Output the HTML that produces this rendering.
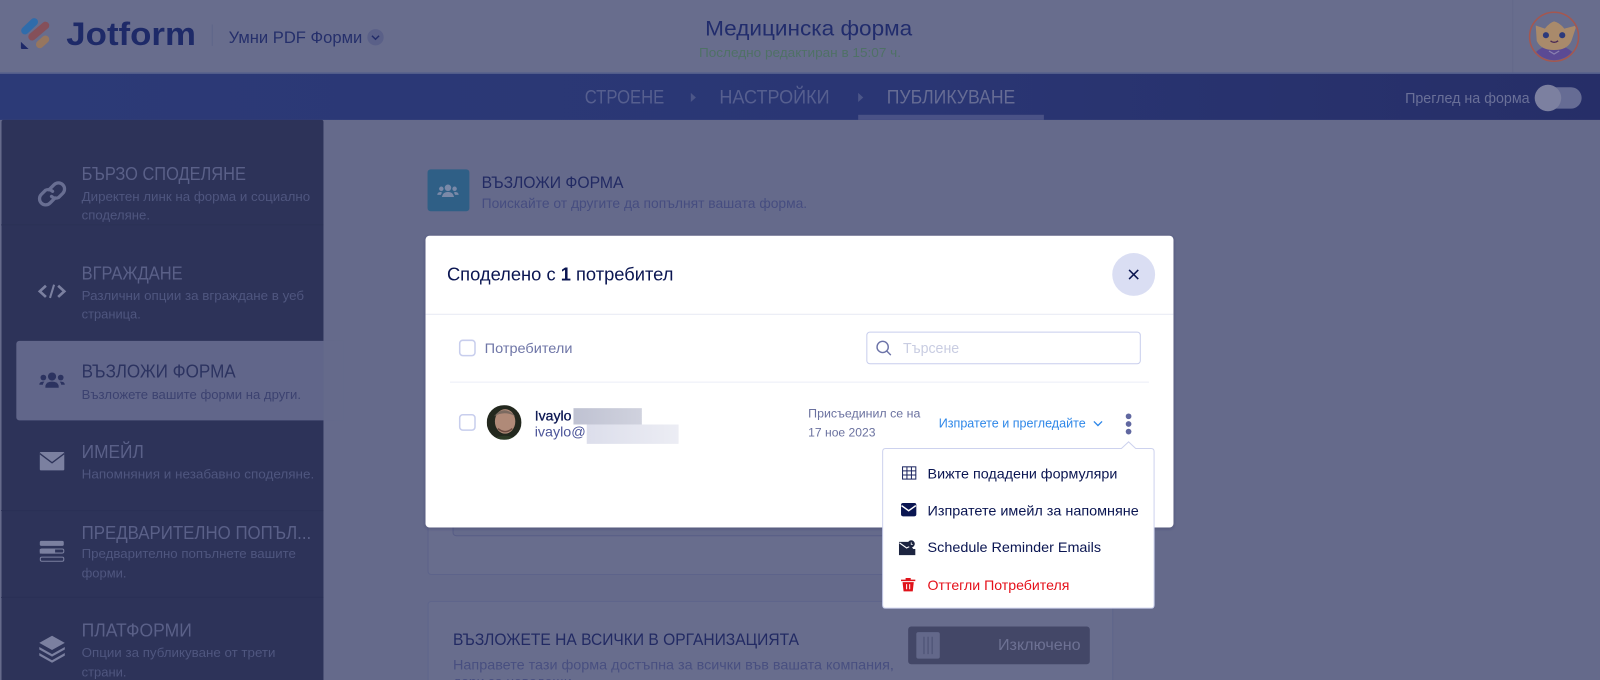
<!DOCTYPE html>
<html><head><meta charset="utf-8"><style>
html,body{margin:0;padding:0;background:#656a8b;width:1600px;height:680px;overflow:hidden}
svg{display:block;font-family:"Liberation Sans",sans-serif}
</style></head><body>
<svg width="1600" height="680" viewBox="0 0 1568 666.4" xmlns="http://www.w3.org/2000/svg">
<defs>
<linearGradient id="nv" x1="0" x2="1"><stop offset="0" stop-color="#2c3a77"/><stop offset=".55" stop-color="#2a3674"/><stop offset="1" stop-color="#262e67"/></linearGradient>
<linearGradient id="b1" x1="0" x2="1"><stop offset="0" stop-color="#bfc2d2"/><stop offset="1" stop-color="#d0d2de"/></linearGradient>
<linearGradient id="b2" x1="0" x2="1"><stop offset="0" stop-color="#dcdeeb"/><stop offset="1" stop-color="#eceDf4"/></linearGradient>
<filter id="sh" x="-5%" y="-5%" width="110%" height="115%"><feDropShadow dx="0" dy="1" stdDeviation="1.5" flood-color="#2a2f55" flood-opacity=".35"/></filter>
<clipPath id="av"><circle cx="1523" cy="36" r="23"/></clipPath>
<clipPath id="fa"><circle cx="494" cy="414" r="17"/></clipPath>
</defs>
<rect width="1600" height="700" fill="#656a8b"/>
<!-- header -->
<rect width="1600" height="71" fill="#686d8d"/>
<rect y="71" width="1600" height="1.500" fill="#525d8b"/>
<g stroke-linecap="round" fill="none">
<path d="M24.500 30L33.500 21.500" stroke="#2f6cab" stroke-width="7.500"/>
<path d="M31.500 36L44.500 25" stroke="#85505a" stroke-width="7.500"/>
<path d="M39 43.500L44.500 38.500" stroke="#96765f" stroke-width="7.500"/>
</g>
<path d="M20.500 41L28 48H21.500Q20.500 48 20.500 47Z" fill="#1e2968"/>
<text x="65" y="44" font-size="32" font-weight="700" fill="#1e2a68" textLength="127" lengthAdjust="spacingAndGlyphs">Jotform</text>
<rect x="207.500" y="24" width="1" height="21" fill="#5f6589"/>
<text x="224" y="42" font-size="16.500" fill="#252f6b" textLength="131" lengthAdjust="spacingAndGlyphs">Умни PDF Форми</text>
<circle cx="368" cy="36.500" r="8" fill="#5a6088"/>
<path d="M364.500 35l3.500 3.500 3.500-3.500" fill="none" stroke="#222c68" stroke-width="1.400"/>
<text x="691" y="35" font-size="20.500" fill="#212c6c" textLength="203" lengthAdjust="spacingAndGlyphs">Медицинска форма</text>
<text x="685" y="56" font-size="13" fill="#4f7166" textLength="198" lengthAdjust="spacingAndGlyphs">Последно редактиран в 15:07 ч.</text>
<rect x="1482" y="0" width="1" height="71" fill="#63688a"/>
<!-- avatar -->
<circle cx="1523" cy="36" r="24" fill="#686d8d" stroke="#a5574f" stroke-width="1.500"/>
<g clip-path="url(#av)">
<path d="M1500 60Q1503 50 1513 46H1533Q1543 50 1546 60V64H1500Z" fill="#5b4a94"/>
<path d="M1505 25L1514 28Q1519 22 1523 21Q1528 22 1533 28L1545 25L1540 40Q1536 49 1523 49Q1510 49 1506 40Z" fill="#a98a6b"/>
<circle cx="1515" cy="34.500" r="3" fill="#2c3a7c"/><circle cx="1531" cy="34.500" r="3" fill="#2c3a7c"/>
<path d="M1519.500 40Q1523 43 1527 40" stroke="#4b2a55" stroke-width="1.300" fill="none"/>
<path d="M1518 50l5 3 5-3" stroke="#8a80b0" stroke-width="1.200" fill="none"/>
</g>
<!-- nav -->
<rect y="72.500" width="1600" height="45" fill="url(#nv)"/>
<text x="573" y="101.500" font-size="19" fill="#565f8f" textLength="78" lengthAdjust="spacingAndGlyphs">СТРОЕНЕ</text>
<path d="M677 91l5 4.500-5 4.500z" fill="#4c5688"/>
<text x="705" y="101.500" font-size="19" fill="#565f8f" textLength="108" lengthAdjust="spacingAndGlyphs">НАСТРОЙКИ</text>
<path d="M841 91l5 4.500-5 4.500z" fill="#4c5688"/>
<text x="869" y="101.500" font-size="19" fill="#666c94" textLength="126" lengthAdjust="spacingAndGlyphs">ПУБЛИКУВАНЕ</text>
<rect x="841" y="112.500" width="182" height="5" fill="#4a5286"/>
<text x="1377" y="101" font-size="14.500" fill="#6a7098" textLength="122" lengthAdjust="spacingAndGlyphs">Преглед на форма</text>
<rect x="1505" y="85.500" width="45" height="21" rx="10.500" fill="#666c94"/>
<circle cx="1517" cy="96" r="13" fill="#7c80a0"/>
<!-- sidebar -->
<rect x="1.500" y="117.500" width="315.500" height="562" rx="2" fill="#2d3359"/>
<rect x="16" y="334" width="314" height="78" rx="3" fill="#61668a"/>
<rect x="317" y="334" width="20" height="78" fill="#656a8b"/>
<rect x="1" y="220" width="316" height=".8" fill="#2a3055"/>
<rect x="1" y="500" width="316" height=".8" fill="#2a3055"/>
<rect x="1" y="585" width="316" height=".8" fill="#2a3055"/>
<g font-size="18" fill="#5a6088">
<text x="80" y="176.500" textLength="161" lengthAdjust="spacingAndGlyphs">БЪРЗО СПОДЕЛЯНЕ</text>
<text x="80" y="274" textLength="99" lengthAdjust="spacingAndGlyphs">ВГРАЖДАНЕ</text>
<text x="80" y="370" textLength="151" lengthAdjust="spacingAndGlyphs" fill="#2c3360">ВЪЗЛОЖИ ФОРМА</text>
<text x="80" y="449" textLength="61" lengthAdjust="spacingAndGlyphs">ИМЕЙЛ</text>
<text x="80" y="528" textLength="225" lengthAdjust="spacingAndGlyphs">ПРЕДВАРИТЕЛНО ПОПЪЛ...</text>
<text x="80" y="624" textLength="108" lengthAdjust="spacingAndGlyphs">ПЛАТФОРМИ</text>
</g>
<g font-size="12.500" fill="#4f567f">
<text x="80" y="197" textLength="224" lengthAdjust="spacingAndGlyphs">Директен линк на форма и социално</text>
<text x="80" y="215" textLength="67" lengthAdjust="spacingAndGlyphs">споделяне.</text>
<text x="80" y="294" textLength="218" lengthAdjust="spacingAndGlyphs">Различни опции за вграждане в уеб</text>
<text x="80" y="312" textLength="58" lengthAdjust="spacingAndGlyphs">страница.</text>
<text x="80" y="391" textLength="215" lengthAdjust="spacingAndGlyphs" fill="#3c4270">Възложете вашите форми на други.</text>
<text x="80" y="469" textLength="228" lengthAdjust="spacingAndGlyphs">Напомняния и незабавно споделяне.</text>
<text x="80" y="547" textLength="210" lengthAdjust="spacingAndGlyphs">Предварително попълнете вашите</text>
<text x="80" y="566" textLength="44" lengthAdjust="spacingAndGlyphs">форми.</text>
<text x="80" y="644" textLength="190" lengthAdjust="spacingAndGlyphs">Опции за публикуване от трети</text>
<text x="80" y="663" textLength="44" lengthAdjust="spacingAndGlyphs">страни.</text>
</g>
<!-- side icons -->
<g fill="none" stroke="#686e92" stroke-width="3.200" stroke-linecap="round">
<path d="M48 186l5-5a6 6 0 0 1 8.500 8.500l-4 4a6 6 0 0 1-7-1"/>
<path d="M54 194l-5 5a6 6 0 0 1-8.500-8.500l4-4a6 6 0 0 1 7 1"/>
</g>
<g fill="none" stroke="#7b80a0" stroke-width="2.600"><path d="M45 280l-6 5.500 6 5.500M57 280l6 5.500-6 5.500"/><path d="M53 279l-4 13" stroke-width="2"/></g>
<g fill="#2c3360">
<circle cx="51" cy="369" r="4"/><circle cx="42.500" cy="370" r="2.800"/><circle cx="59.500" cy="370" r="2.800"/>
<path d="M44.500 378q1-4 6.500-4t6.500 4v2H44.500z"/><path d="M38.500 377q0-3 4-3l1 0q-1.500 1.500-1.500 3zM63.500 377q0-3-4-3l-1 0q1.500 1.500 1.500 3z"/>
</g>
<path d="M39 453q0-1 1-1h22q1 0 1 1v16q0 1-1 1H40q-1 0-1-1z" transform="translate(0 -9)" fill="#7b80a0"/>
<path d="M39 444.500l12 9 12-9" fill="none" stroke="#2d3359" stroke-width="1.300"/>
<g>
<rect x="39" y="530" width="23.500" height="5" rx="1.500" fill="#7b80a0"/>
<rect x="39.500" y="538" width="23" height="4" rx="1.500" fill="none" stroke="#7b80a0" stroke-width="1"/><rect x="39" y="538" width="15" height="4.500" fill="#7b80a0"/>
<rect x="39.500" y="546" width="23" height="4" rx="1.500" fill="none" stroke="#7b80a0" stroke-width="1"/>
</g>
<g fill="#7b80a0"><path d="M51 623l12.500 7-12.500 7-12.500-7z"/><path d="M38.500 634l12.500 7 12.500-7v2.500l-12.500 7-12.500-7z"/><path d="M38.500 640l12.500 7 12.500-7v2.500l-12.500 7-12.500-7z"/></g>
<!-- content -->
<rect x="419" y="166" width="41" height="41" rx="3" fill="#2f5f86"/>
<g fill="#7a89a8"><circle cx="439" cy="184" r="3.200"/><circle cx="432.500" cy="185" r="2.200"/><circle cx="445.500" cy="185" r="2.200"/><path d="M433 193q1-5 6-5t6 5z"/><path d="M428.500 191q0-3 4-3l.5 1-1 2zM449.500 191q0-3-4-3l-.5 1 1 2z"/></g>
<text x="472" y="184" font-size="16" fill="#222a63" textLength="139" lengthAdjust="spacingAndGlyphs">ВЪЗЛОЖИ ФОРМА</text>
<text x="472" y="204" font-size="14" fill="#464d80" textLength="319" lengthAdjust="spacingAndGlyphs">Поискайте от другите да попълнят вашата форма.</text>
<rect x="419.500" y="400" width="671" height="163" rx="3" fill="#686d8d" stroke="#5d638a"/>
<rect x="444" y="430" width="620" height="95" rx="3" fill="#656a8b" stroke="#565c86"/>
<rect x="419.500" y="589.500" width="671" height="110" rx="3" fill="#686d8d" stroke="#5f658b"/>
<text x="444" y="632" font-size="16" fill="#222a63" textLength="339" lengthAdjust="spacingAndGlyphs">ВЪЗЛОЖЕТЕ НА ВСИЧКИ В ОРГАНИЗАЦИЯТА</text>
<text x="444" y="656" font-size="14" fill="#484f80" textLength="432" lengthAdjust="spacingAndGlyphs">Направете тази форма достъпна за всички във вашата компания,</text>
<text x="444" y="673" font-size="14" fill="#484f80" textLength="120" lengthAdjust="spacingAndGlyphs">дори за неводещи.</text>
<rect x="890" y="614" width="178" height="37" rx="3" fill="#434767"/>
<rect x="898" y="619.500" width="23" height="26" rx="2" fill="#63688a"/>
<path d="M905.500 624v17M909.500 624v17M913.500 624v17" stroke="#4a4f72" stroke-width="1"/>
<text x="978" y="637" font-size="15" fill="#6d7193" textLength="81" lengthAdjust="spacingAndGlyphs">Изключено</text>
<!-- modal -->
<rect x="417" y="231" width="733" height="286" rx="4" fill="#fff" filter="url(#sh)"/>
<text x="438" y="275" font-size="18" fill="#0a1551" textLength="222" lengthAdjust="spacingAndGlyphs">Споделено с <tspan font-weight="700">1</tspan> потребител</text>
<circle cx="1111" cy="269" r="21" fill="#dadef3"/>
<path d="M1106.500 264.500l9 9M1115.500 264.500l-9 9" stroke="#0a1551" stroke-width="1.500"/>
<rect x="417" y="307.500" width="733" height="1" fill="#e8eaf4"/>
<rect x="450.500" y="333.500" width="15" height="15" rx="3" fill="#fff" stroke="#c8ceed" stroke-width="1.500"/>
<text x="475" y="346" font-size="14" fill="#6f76a7" textLength="86" lengthAdjust="spacingAndGlyphs">Потребители</text>
<rect x="849.500" y="325.500" width="268" height="31" rx="3" fill="#fff" stroke="#c8ceed"/>
<circle cx="865" cy="340" r="5.500" fill="none" stroke="#6c73a8" stroke-width="1.400"/>
<path d="M869 344l4 4" stroke="#6c73a8" stroke-width="1.400"/>
<text x="885" y="346" font-size="14.500" fill="#c9cde2" textLength="55" lengthAdjust="spacingAndGlyphs">Търсене</text>
<rect x="441" y="374" width="685" height="1" fill="#eceef7"/>
<rect x="450.500" y="406.500" width="15" height="15" rx="3" fill="#fff" stroke="#c8ceed" stroke-width="1.500"/>
<g clip-path="url(#fa)">
<rect x="477" y="397" width="34" height="34" fill="#23281e"/>
<ellipse cx="495" cy="413" rx="10" ry="12" fill="#b08a78"/>
<path d="M484 408q10-12 21 0q-10-6-21 0z" fill="#7b6a60"/>
<path d="M482 431q12-8 26 0z" fill="#2c3a26"/>
<path d="M488 420q7 6 14 0" stroke="#6a4a40" stroke-width="1.500" fill="none"/>
</g>
<text x="524" y="412" font-size="14" fill="#0a1551" textLength="36" lengthAdjust="spacingAndGlyphs" stroke="#0a1551" stroke-width=".3">Ivaylo</text>
<rect x="562" y="400" width="67" height="16" fill="url(#b1)"/>
<text x="524" y="428" font-size="14" fill="#4c5599" textLength="50" lengthAdjust="spacingAndGlyphs">ivaylo@</text>
<rect x="575" y="416" width="90" height="19" fill="url(#b2)"/>
<text x="792" y="409" font-size="12" fill="#6a719f" textLength="110" lengthAdjust="spacingAndGlyphs">Присъединил се на</text>
<text x="792" y="428" font-size="12" fill="#6a719f" textLength="66" lengthAdjust="spacingAndGlyphs">17 ное 2023</text>
<text x="920" y="419" font-size="12.500" fill="#2e87e8" textLength="144" lengthAdjust="spacingAndGlyphs">Изпратете и прегледайте</text>
<path d="M1072 413l4 4 4-4" fill="none" stroke="#2e87e8" stroke-width="1.300"/>
<g fill="#6067a0"><circle cx="1106" cy="408" r="2.800"/><circle cx="1106" cy="415.500" r="2.800"/><circle cx="1106" cy="423" r="2.800"/></g>
<!-- dropdown -->
<path d="M868 439.500H1099L1106 433L1113 439.500H1128Q1131 439.500 1131 442.500V593Q1131 596 1128 596H868Q865 596 865 593V442.500Q865 439.500 868 439.500Z" fill="#fff" stroke="#cdd2ee"/>
<g stroke="#1d2660" stroke-width="1" fill="none"><rect x="884.500" y="457.500" width="13" height="12"/><path d="M884.500 461.500h13M884.500 465.500h13M888.800 457.500v12M893.200 457.500v12"/></g>
<text x="909" y="469" font-size="14" fill="#0a1551" textLength="186" lengthAdjust="spacingAndGlyphs">Вижте подадени формуляри</text>
<rect x="883" y="493" width="15" height="13" rx="2" fill="#0a1551"/>
<path d="M883.500 495.500l7 5 7-5" fill="none" stroke="#fff" stroke-width="1.400"/>
<text x="909" y="505" font-size="14" fill="#0a1551" textLength="207" lengthAdjust="spacingAndGlyphs">Изпратете имейл за напомняне</text>
<path d="M881 531h10l1 3 3 4h2v6h-16z" fill="#1c2440"/>
<path d="M881.500 532l7 5 4-2" fill="none" stroke="#fff" stroke-width="1.100"/>
<circle cx="893" cy="533" r="3.500" fill="#1c2440"/><path d="M893 531.500v2h1.500" stroke="#fff" stroke-width=".8" fill="none"/>
<text x="909" y="541" font-size="14" fill="#0a1551" textLength="170" lengthAdjust="spacingAndGlyphs">Schedule Reminder Emails</text>
<path d="M883 568h14v1.500h-14zM887.500 566.500h5v1.500h-5zM884.500 570.500h11l-1 9h-9z" fill="#e0121a"/>
<path d="M888.500 572.500v5M891.500 572.500v5" stroke="#fff" stroke-width="1"/>
<text x="909" y="578" font-size="14" fill="#e5101a" textLength="139" lengthAdjust="spacingAndGlyphs">Оттегли Потребителя</text>
</svg>
</body></html>
